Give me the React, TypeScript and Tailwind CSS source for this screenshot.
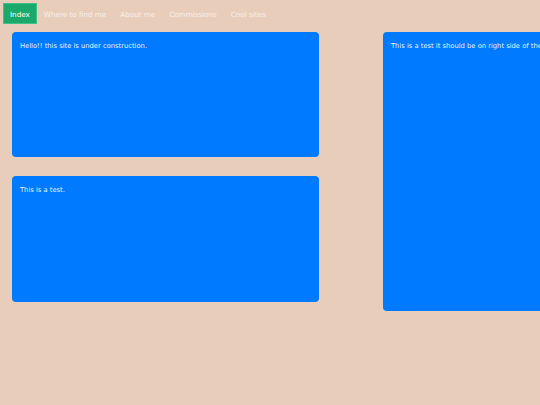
const links = ['Index', 'Where to find me', 'About me', 'Commissions', 'Cool sites'];

function Box({ text, className }: { text: string; className: string }) {
  return (
    <div className={`bg-[#007bff] rounded-[4px] px-[8px] pt-[10px] text-[6.75px] leading-[9px] text-white/95 whitespace-nowrap overflow-hidden ${className}`}>
      {text}
    </div>
  );
}

export default function App() {
  return (
    <div className="w-[540px] h-[405px] overflow-hidden bg-[#e8cdbb] font-['DejaVu_Sans',sans-serif]">
      {/* nav */}
      <nav className="flex items-center p-[3px]">
        {links.map((l, i) => (
          <a
            key={l}
            className={`h-[21px] pt-[4px] flex items-center text-[7.2px] ${
              i === 0 ? 'px-[6px] bg-[#1aa96b] border border-[#3ec28a] text-white' : 'px-[7px] text-white/65'
            }`}
          >
            {l}
          </a>
        ))}
      </nav>

      {/* content */}
      <div className="flex gap-[64px] pl-[12px] pt-[5px]">
        <div className="flex flex-col gap-[19px] w-[307px] shrink-0">
          <Box text="Hello!! this site is under construction." className="h-[125px]" />
          <Box text="This is a test." className="h-[126px]" />
        </div>
        <Box
          text="This is a test it should be on right side of the page"
          className="w-[307px] h-[279px] shrink-0"
        />
      </div>
    </div>
  );
}
